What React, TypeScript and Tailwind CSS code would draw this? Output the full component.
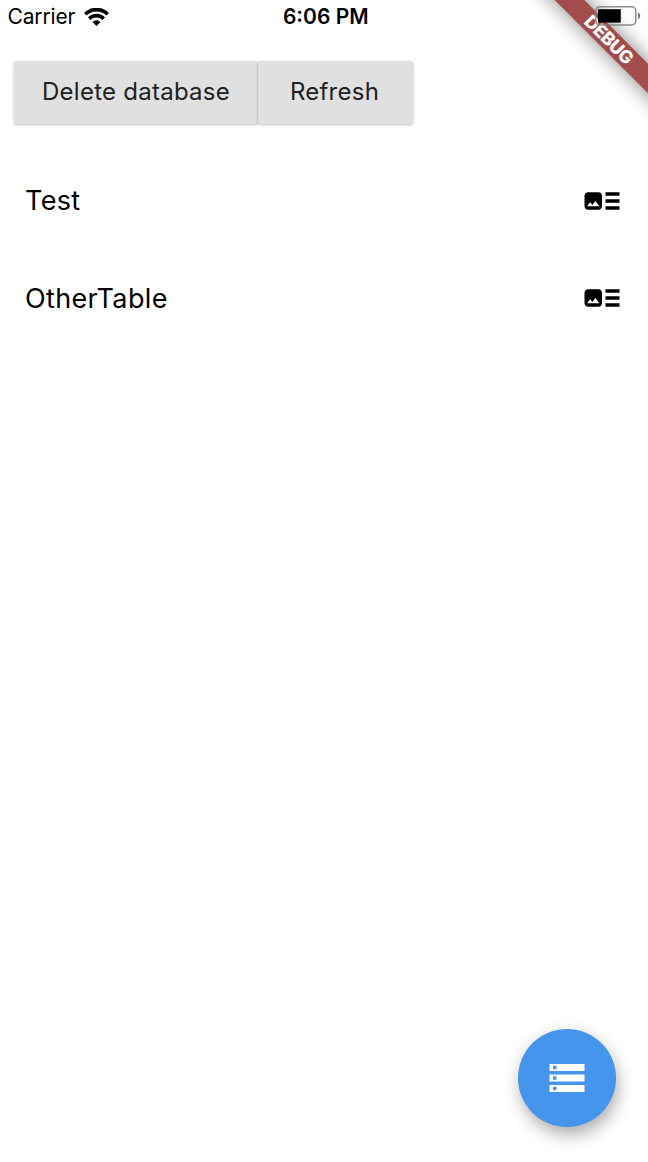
const tables = ["Test", "OtherTable"];

function Wifi() {
  return (
    <svg className="ml-[9px] h-[18px] w-[25px]" viewBox="0 0 25 18" fill="none" stroke="#000" strokeWidth="3.7">
      <path d="M1.3 6.2A16 16 0 0 1 23.7 6.2" />
      <path d="M5.3 10.7A10.2 10.2 0 0 1 19.7 10.7" />
      <path d="M8.5 13.9A5.4 5.4 0 0 1 16.5 13.9L12.5 17.9Z" fill="#000" stroke="none" />
    </svg>
  );
}

function Battery() {
  return (
    <svg className="h-[20px] w-[46px]" viewBox="0 0 46 20">
      <rect x="0.8" y="0.8" width="40" height="18.2" rx="4.2" fill="none" stroke="#808080" strokeOpacity="0.9" strokeWidth="1.5" />
      <rect x="3" y="3.2" width="22.8" height="13.4" fill="#000" />
      <path d="M43 6.6C46 8 46 11.8 43 13.2Z" fill="#7c7c7c" />
    </svg>
  );
}

function ArtTrack() {
  return (
    <svg className="size-[42px]" viewBox="0 0 24 24" fill="#000">
      <path d="M22 13h-8v-2h8v2zm0-6h-8v2h8V7zm-8 10h8v-2h-8v2zm-2-8v6c0 1.1-.9 2-2 2H4c-1.1 0-2-.9-2-2V9c0-1.1.9-2 2-2h6c1.1 0 2 .9 2 2zm-1.5 6l-2.25-3-1.75 2.26-1.25-1.51L3.5 15h7z" />
    </svg>
  );
}

function Storage() {
  return (
    <svg className="size-[42px]" viewBox="0 0 24 24" fill="#fff">
      <path d="M2 20h20v-4H2v4zm2-3h2v2H4v-2zM2 4v4h20V4H2zm4 3H4V5h2v2zm-4 7h20v-4H2v4zm2-3h2v2H4v-2z" />
    </svg>
  );
}

const button =
  "flex h-[63px] items-center justify-center rounded-[3px] bg-[#e0e0e0] pb-px text-[24px] tracking-[0.25px] text-[#212121] shadow-[0_1px_3px_rgba(0,0,0,0.26)]";

export default function App() {
  return (
    <div className="relative flex h-[1162px] w-[648px] flex-col overflow-hidden bg-white font-['Inter','Liberation_Sans',sans-serif] text-black">
      <div className="pointer-events-none absolute top-[28.5px] left-[509px] flex h-[21px] w-[200px] rotate-45 items-center justify-center bg-[#a24d4b] text-[18px] leading-none font-extrabold tracking-[-0.4px] text-white shadow-[0_0_20px_rgba(0,0,0,0.5)]">
        DEBUG
      </div>
      <header className="relative grid h-[33px] grid-cols-3 items-center pr-[7px] pl-[7.5px] text-[21px]">
        <div className="flex items-center">
          <span className="tracking-[-0.15px]">Carrier</span>
          <Wifi />
        </div>
        <span className="pl-[3px] text-center font-semibold">6:06 PM</span>
        <div className="flex justify-end pb-px">
          <Battery />
        </div>
      </header>
      <div className="mt-[28px] ml-[14px] flex">
        <button className={`${button} w-[244px]`}>Delete database</button>
        <button className={`${button} w-[155px] pr-[2px]`}>Refresh</button>
      </div>
      <ul className="mt-[28px]">
        {tables.map((name) => (
          <li key={name} className="flex h-[97.5px] items-center justify-between pr-[25px] pl-[25px] text-[27px] tracking-[0.35px]">
            <span className="pt-px">{name}</span>
            <ArtTrack />
          </li>
        ))}
      </ul>
      <button className="absolute top-[1029px] left-[518px] flex size-[98px] items-center justify-center rounded-full bg-[#4595ec] shadow-[3px_10px_18px_-2px_rgba(0,0,0,0.28),0_2px_18px_rgba(0,0,0,0.1)]">
        <Storage />
      </button>
    </div>
  );
}
